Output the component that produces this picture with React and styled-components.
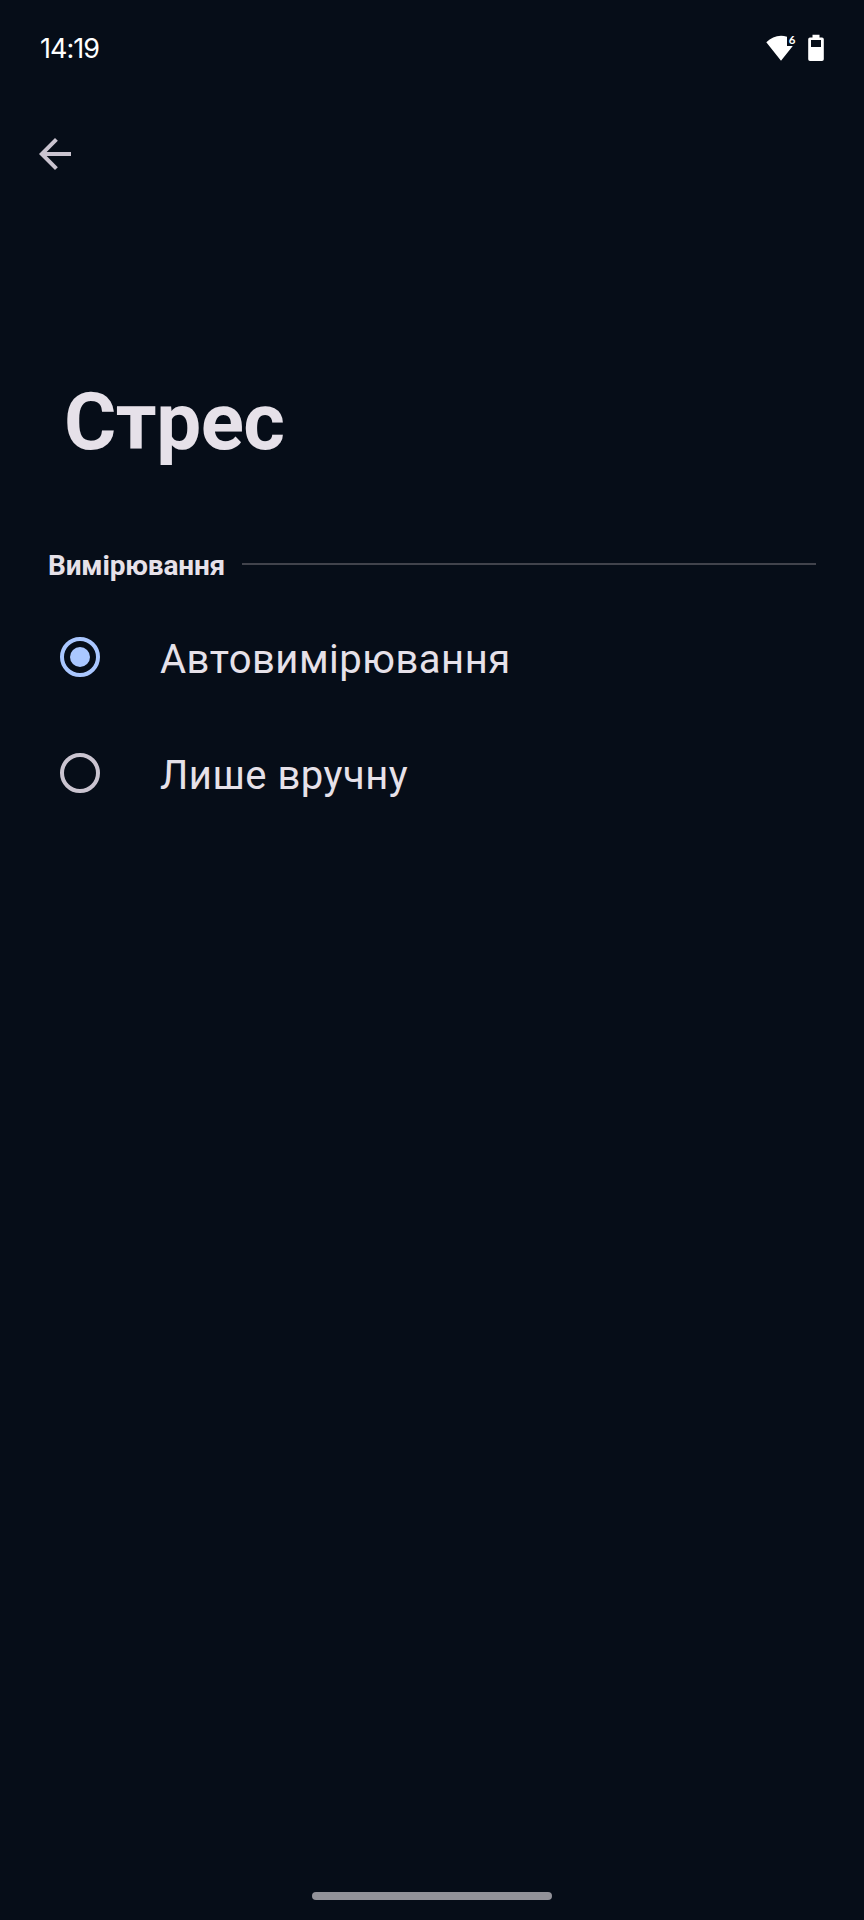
import React, { useState } from 'react'
import styled, { createGlobalStyle } from 'styled-components'

const GlobalStyle = createGlobalStyle`
    * {
        box-sizing: border-box;
    }

    body {
        margin: 0;
        background: #060d18;
    }
`

const Screen = styled.div`
    display: flex;
    flex-direction: column;
    width: 864px;
    height: 1920px;
    background: #060d18;
    color: #e6e1e9;
    font-family: Roboto, sans-serif;
    overflow: hidden;
`

const StatusBar = styled.header`
    display: flex;
    align-items: center;
    justify-content: space-between;
    height: 96px;
    padding: 0 40px;
`

const Clock = styled.span`
    padding-top: 2px;
    color: #fff;
    font-family: Inter, sans-serif;
    font-size: 27px;
    line-height: 32px;
    letter-spacing: -1px;
`

const StatusIcons = styled.div`
    display: flex;
    gap: 10px;
`

const Toolbar = styled.nav`
    height: 278px;
    padding: 34px 31px;
`

const BackButton = styled.button`
    display: block;
    width: 48px;
    height: 48px;
    padding: 0;
    border: 0;
    background: none;
    color: #cac4d0;
`

const Title = styled.h1`
    margin: 0;
    padding-left: 64px;
    font-size: 80px;
    font-weight: 700;
    line-height: 96px;
    letter-spacing: -0.5px;
`

const SectionHeader = styled.div`
    display: flex;
    align-items: center;
    gap: 17px;
    margin-top: 75px;
    padding: 0 48px;
    height: 40px;
`

const SectionTitle = styled.h2`
    margin: 0;
    padding-top: 2px;
    font-size: 28px;
    font-weight: 700;
    line-height: 40px;
    letter-spacing: -0.18px;
`

const Divider = styled.div`
    flex: 1;
    height: 2px;
    margin-bottom: 2px;
    background: #41434c;
`

const Options = styled.div`
    flex: 1;
    padding-top: 14px;
`

const Option = styled.div`
    display: flex;
    align-items: center;
    gap: 60px;
    height: 116px;
    padding-left: 60px;
`

const Radio = styled.span`
    display: flex;
    align-items: center;
    justify-content: center;
    width: 40px;
    height: 40px;
    border: 4px solid ${props => (props.$checked ? '#aac7ff' : '#cac4d0')};
    border-radius: 50%;
`

const RadioDot = styled.span`
    width: 20px;
    height: 20px;
    border-radius: 50%;
    background: #aac7ff;
`

const OptionLabel = styled.span`
    padding-top: 6px;
    font-size: 40px;
    line-height: 48px;
    letter-spacing: 0.5px;
`

const GestureBar = styled.footer`
    display: flex;
    justify-content: center;
    height: 28px;
`

const GestureHandle = styled.div`
    width: 240px;
    height: 8px;
    border-radius: 4px;
    background: #929299;
`

const WifiBadge = styled.text`
    font-family: Lato, sans-serif;
    font-size: 11.5px;
    font-weight: 700;
`

const WifiIcon = () => (
    <svg width="32" height="28" viewBox="0 0 32 28" fill="#fff">
        <path d="M0.3 8.2C4.6 4 9.5 1.8 15 1.8c2 0 4 0.3 6 0.9V12h5.8L15 26.8z" />
        <WifiBadge x="22.8" y="10.2">6</WifiBadge>
    </svg>
)

const BatteryIcon = () => (
    <svg width="16" height="28" viewBox="0 0 16 28">
        <path
            d="M4.5 0.7h7v2.7H14a1.8 1.8 0 0 1 1.8 1.8v20A1.8 1.8 0 0 1 14 27H2a1.8 1.8 0 0 1-1.8-1.8v-20A1.8 1.8 0 0 1 2 3.4h2.5zM3 6v7h10V6z"
            fill="#fff"
            fillRule="evenodd"
        />
    </svg>
)

const BackIcon = () => (
    <svg width="48" height="48" viewBox="0 0 24 24" fill="currentColor">
        <path d="M20 11H7.83l5.59-5.59L12 4l-8 8 8 8 1.41-1.41L7.83 13H20v-2z" />
    </svg>
)

const options = [
    { id: 'auto', label: 'Автовимірювання' },
    { id: 'manual', label: 'Лише вручну' },
]

const App = () => {
    const [selected, setSelected] = useState('auto')

    return (
        <Screen>
            <GlobalStyle />
            <StatusBar>
                <Clock>14:19</Clock>
                <StatusIcons>
                    <WifiIcon />
                    <BatteryIcon />
                </StatusIcons>
            </StatusBar>
            <Toolbar>
                <BackButton>
                    <BackIcon />
                </BackButton>
            </Toolbar>
            <Title>Стрес</Title>
            <SectionHeader>
                <SectionTitle>Вимірювання</SectionTitle>
                <Divider />
            </SectionHeader>
            <Options>
                {options.map(({ id, label }) => (
                    <Option key={id} onClick={() => setSelected(id)}>
                        <Radio $checked={selected === id}>
                            {selected === id && <RadioDot />}
                        </Radio>
                        <OptionLabel>{label}</OptionLabel>
                    </Option>
                ))}
            </Options>
            <GestureBar>
                <GestureHandle />
            </GestureBar>
        </Screen>
    )
}

export default App
